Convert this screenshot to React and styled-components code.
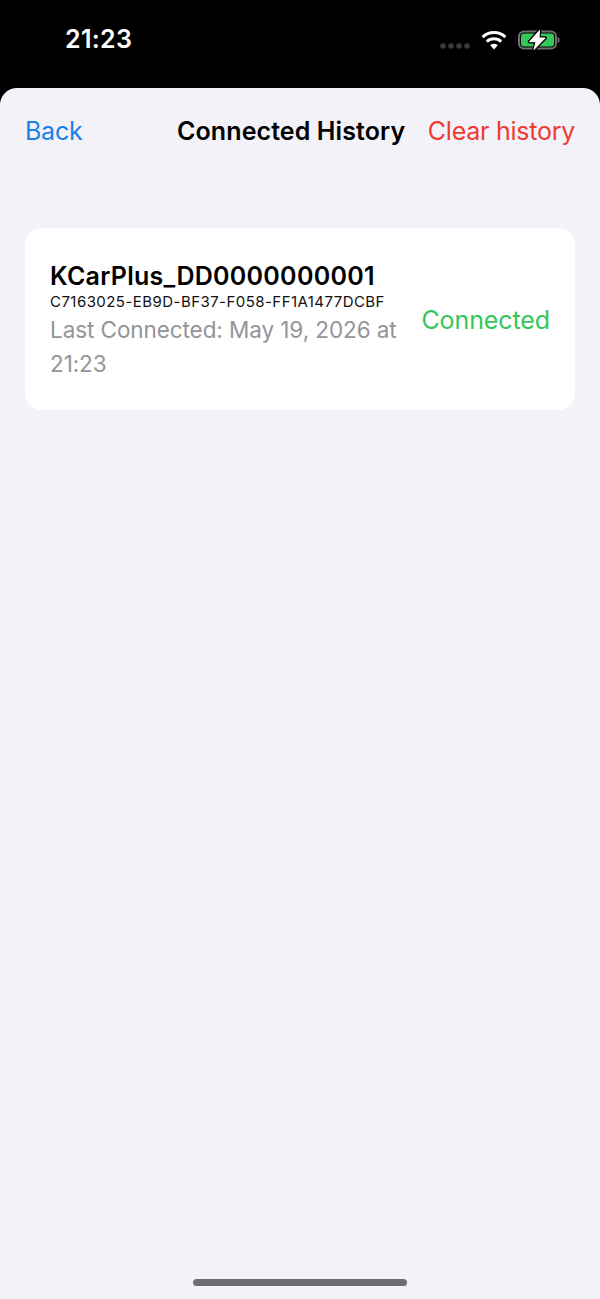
import React from "react";
import styled, { createGlobalStyle } from "styled-components";

const Global = createGlobalStyle`
  html, body { margin: 0; padding: 0; background: #000; }
  body { font-family: Inter, "Liberation Sans", sans-serif; }
`;
const Screen = styled.div`
  width: 600px; height: 1299px; display: flex; flex-direction: column; background: #000; overflow: hidden; position: relative;
`;
const StatusBar = styled.div`
  height: 88px; flex: none; display: flex; align-items: flex-start; justify-content: space-between; padding: 0 40px 0 65px; box-sizing: border-box;
`;
const Clock = styled.div`
  color: #fff; font-size: 25px; font-weight: 600; line-height: 30px; margin-top: 24px; letter-spacing: 0.3px;
`;
const StatusIcons = styled.div`
  display: flex; align-items: center; gap: 11px; margin-top: 29px; height: 22px;
`;
const DotsSlot = styled.div`
  align-self: flex-end; display: flex; margin-bottom: 2px;
`;
const Sheet = styled.div`
  flex: 1; background: #f2f2f8; border-radius: 17px 17px 0 0; display: flex; flex-direction: column; padding: 0 25px;
`;
const Header = styled.div`
  height: 86px; display: grid; grid-template-columns: 152px auto 1fr; align-items: center; flex: none;
`;
const HeaderAction = styled.div`
  color: ${p => p.$color}; font-size: 25px; line-height: 30px; font-weight: 400; letter-spacing: -0.25px; justify-self: ${p => p.$end ? "end" : "start"};
`;
const Title = styled.div`
  color: #000; font-size: 25px; font-weight: 600; line-height: 30px; letter-spacing: 0.1px;
`;
const Card = styled.div`
  margin-top: 54px; height: 182px; box-sizing: border-box; background: #fff; border-radius: 17px; padding: 32px 25px 0 25px; display: flex; justify-content: space-between;
`;
const Info = styled.div`
  width: 352px; display: flex; flex-direction: column;
`;
const DeviceName = styled.div`
  font-size: 25px; font-weight: 600; line-height: 32px; color: #000; letter-spacing: 0.27px;
`;
const DeviceId = styled.div`
  font-size: 15px; line-height: 18px; color: #111; letter-spacing: 0.45px; margin-top: 1px;
`;
const LastSeen = styled.div`
  font-size: 22.5px; line-height: 34px; color: #949499; letter-spacing: -0.08px; margin-top: 2px;
`;
const Status = styled.div`
  color: #34c759; font-size: 25px; line-height: 30px; letter-spacing: -0.1px; align-self: center; margin-top: -31px;
`;
const HomeBar = styled.div`
  position: absolute; left: 193px; top: 1279px; width: 214px; height: 7px; border-radius: 4px; background: #6e6e70;
`;

const Dots = () => (
  <svg width="30" height="6" viewBox="0 0 30 6">
    {[3, 11, 19, 27].map(x => <circle key={x} cx={x} cy="3" r="2.7" fill="#3c3c3c" />)}
  </svg>
);
const Wifi = () => (
  <svg width="26" height="20" viewBox="0 0 26 20">
    <path d="M13 19.5 L9.2 15.2 A5.6 5.6 0 0 1 16.8 15.2 Z" fill="#fff" />
    <path d="M5.8 11.6 A10.4 10.4 0 0 1 20.2 11.6" fill="none" stroke="#fff" strokeWidth="3" />
    <path d="M1.6 7.2 A16.4 16.4 0 0 1 24.4 7.2" fill="none" stroke="#fff" strokeWidth="3" />
  </svg>
);
const BOLT = "M21.5 1.5 L11.5 12.7 H18 L16 20.5 L27.2 9 H21 Z";
const Battery = () => (
  <svg width="42" height="22" viewBox="0 0 42 22">
    <rect x="1" y="2.5" width="37" height="17" rx="5" fill="none" stroke="#6f6f6f" strokeWidth="2" />
    <rect x="3" y="4.5" width="33" height="13" rx="3" fill="#34c759" />
    <path d="M39.6 8 C41 8.4 41.6 9.5 41.6 11 C41.6 12.5 41 13.6 39.6 14 Z" fill="#6f6f6f" />
    <path d={BOLT} fill="#000" stroke="#000" strokeWidth="3.4" strokeLinejoin="round" />
    <path d={BOLT} fill="#fff" stroke="#fff" strokeWidth="1" strokeLinejoin="round" />
  </svg>
);

export default function App() {
  return (
    <Screen>
      <Global />
      <StatusBar>
        <Clock>21:23</Clock>
        <StatusIcons>
          <DotsSlot><Dots /></DotsSlot>
          <Wifi />
          <Battery />
        </StatusIcons>
      </StatusBar>
      <Sheet>
        <Header>
          <HeaderAction $color="#1c7fe6">Back</HeaderAction>
          <Title>Connected History</Title>
          <HeaderAction $color="#f03a30" $end>Clear history</HeaderAction>
        </Header>
        <Card>
          <Info>
            <DeviceName>KCarPlus_DD0000000001</DeviceName>
            <DeviceId>C7163025-EB9D-BF37-F058-FF1A1477DCBF</DeviceId>
            <LastSeen>Last Connected: May 19, 2026 at 21:23</LastSeen>
          </Info>
          <Status>Connected</Status>
        </Card>
      </Sheet>
      <HomeBar />
    </Screen>
  );
}
